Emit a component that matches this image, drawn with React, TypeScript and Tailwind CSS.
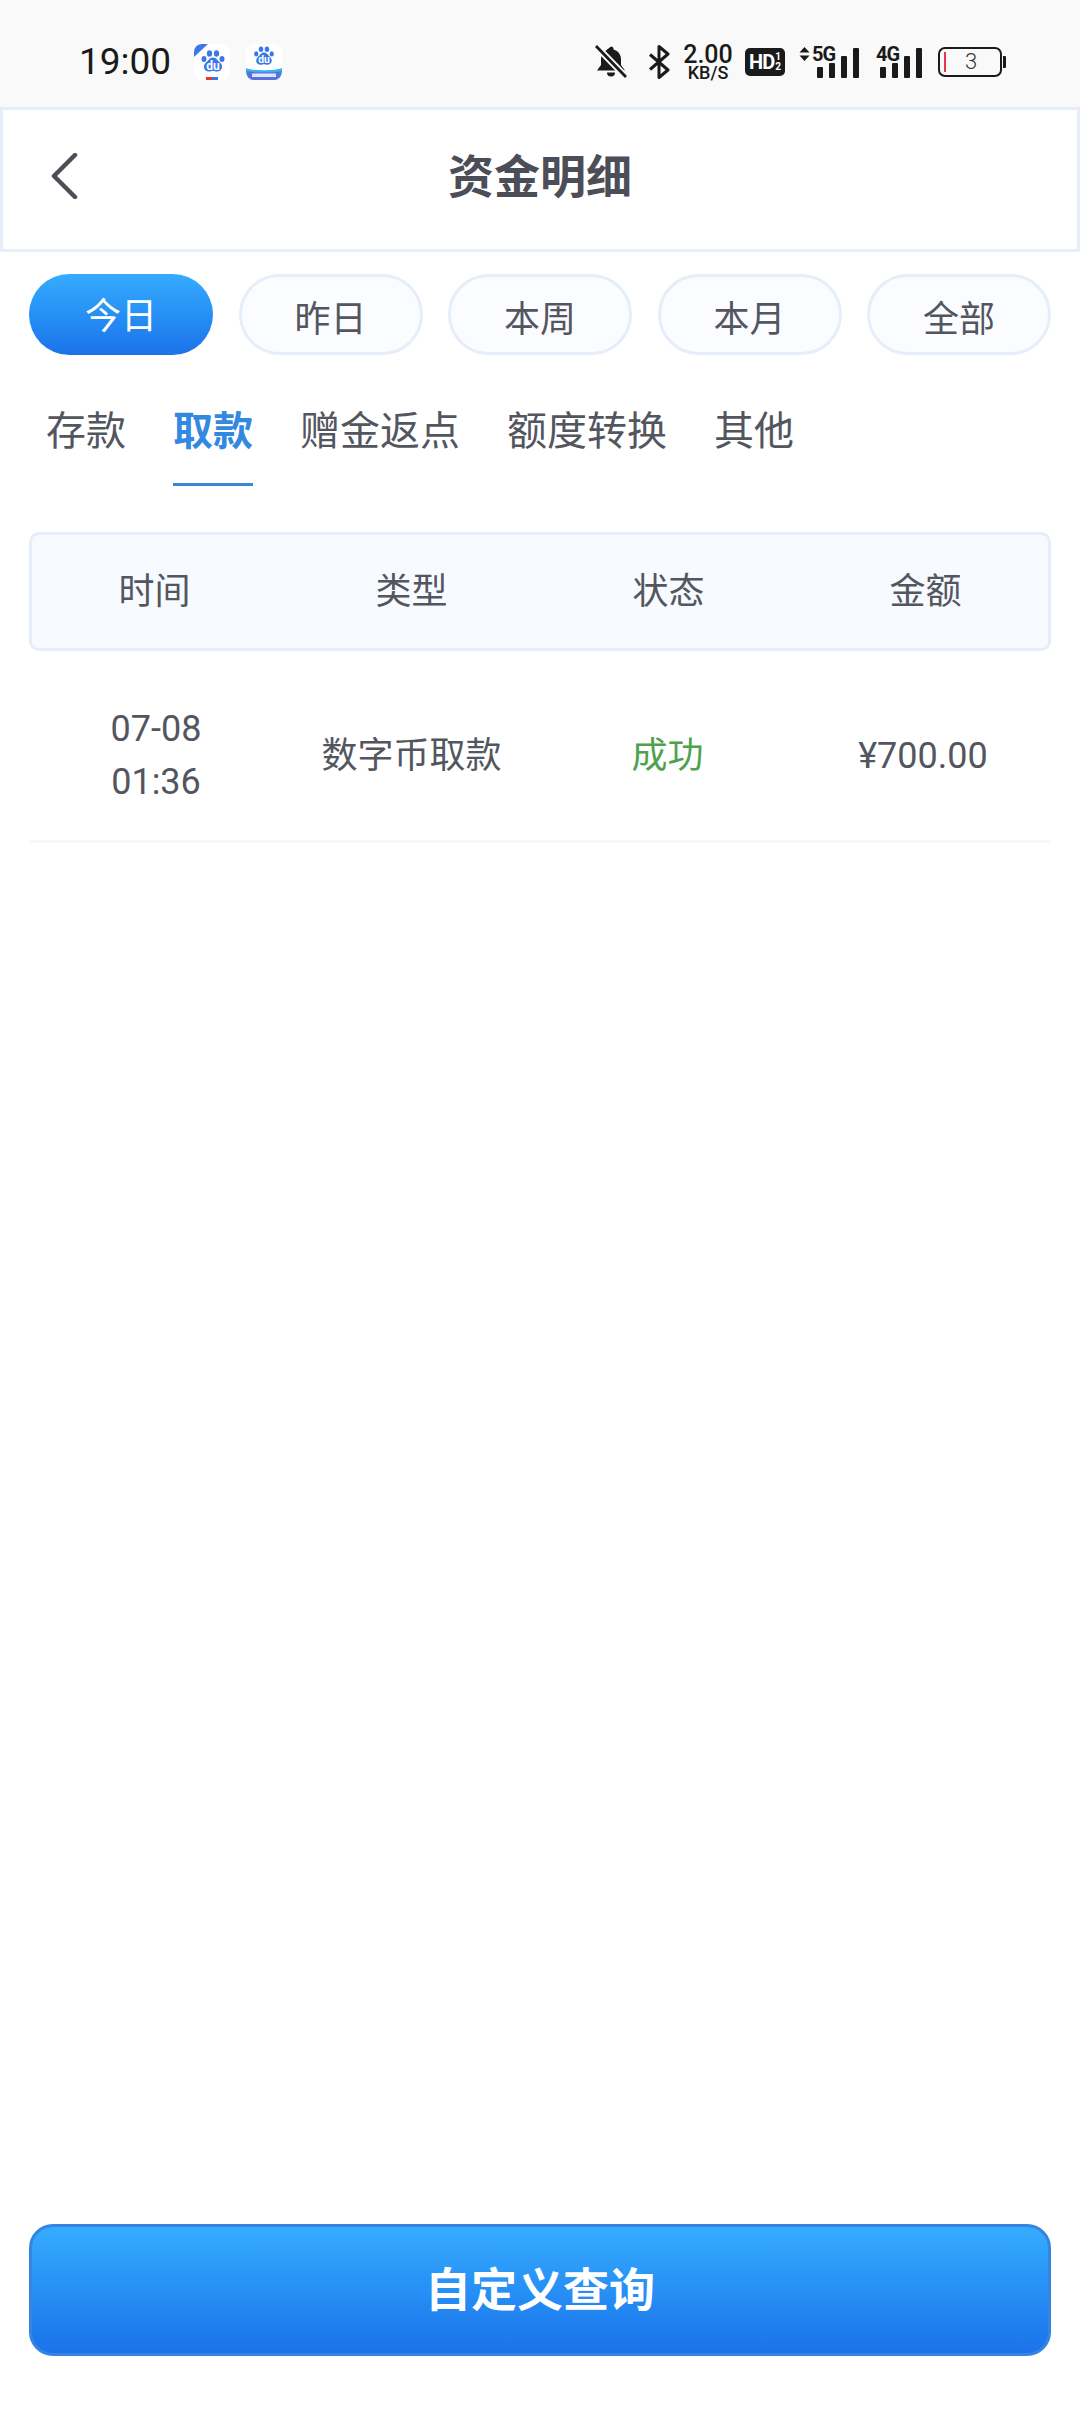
const ranges = ['昨日', '本周', '本月', '全部'];
const tabs = ['存款', '取款', '赠金返点', '额度转换', '其他'];
const columns = ['时间', '类型', '状态', '金额'];

function Paw() {
  return (
    <>
      <ellipse cx="9" cy="15" rx="2.500" ry="3" fill="#3a78e8" />
      <ellipse cx="14.500" cy="9.500" rx="2.600" ry="3.200" fill="#3a78e8" />
      <ellipse cx="21.500" cy="9.500" rx="2.600" ry="3.200" fill="#3a78e8" />
      <ellipse cx="27" cy="15" rx="2.500" ry="3" fill="#3a78e8" />
      <path d="M18 13.500c3.500 0 4.500 3 7 5 3.500 2.800 2.500 9-3 9-1.800 0-2.500-.6-4-.6s-2.200.6-4 .6c-5.500 0-6.500-6.200-3-9 2.500-2 3.500-5 7-5z" fill="#3a78e8" />
      <text x="18" y="25.500" textAnchor="middle" fontSize="12" fontWeight="700" fill="#fff" fontFamily="Roboto, sans-serif">du</text>
    </>
  );
}

function AppIconOne() {
  return (
    <svg width="36" height="36" viewBox="0 0 36 36" className="shrink-0">
      <rect width="36" height="36" rx="8" fill="#fff" />
      <path d="M0 13V8a8 8 0 0 1 8-8h6z" fill="#3a78e8" />
      <g transform="translate(1 0)"><Paw /></g>
      <rect x="12" y="33" width="6" height="3" fill="#e53935" />
      <rect x="18" y="33" width="6" height="3" fill="#3a78e8" />
    </svg>
  );
}

function AppIconTwo() {
  return (
    <svg width="36" height="36" viewBox="0 0 36 36" className="shrink-0">
      <rect width="36" height="36" rx="8" fill="#fff" />
      <g transform="translate(2.500 -3) scale(.86)"><Paw /></g>
      <path d="M0 24c6 3 30 3 36 0v4a8 8 0 0 1-8 8H8a8 8 0 0 1-8-8z" fill="#35b3ea" />
      <path d="M1 27c6 2 28 2 34 0v2a7 7 0 0 1-7 7H8a7 7 0 0 1-7-7z" fill="#5a6fe0" />
      <rect x="6" y="29.500" width="24" height="3.500" fill="#dfe6fb" />
    </svg>
  );
}

function BellOff() {
  return (
    <svg width="32" height="34" viewBox="0 0 32 34" className="shrink-0">
      <path d="M16 1.500a2.500 2.500 0 0 1 2.500 2.500v.6C23.500 6 26 10 26 14.500V20l4 5.500H2L6 20v-5.500c0-2.600.8-5 2.300-7z" fill="#1a1a1a" />
      <path d="M12 27.500h8a4 4 0 0 1-8 0z" fill="#1a1a1a" />
      <path d="M1 1l30 31" stroke="#f9f9f9" strokeWidth="6.500" />
      <path d="M1 1l30 31" stroke="#1a1a1a" strokeWidth="2.800" />
    </svg>
  );
}

function Bluetooth() {
  return (
    <svg width="22" height="34" viewBox="0 0 22 34" className="shrink-0">
      <path d="M2 9.500l18 15.500-9 7.500V1.500l9 7.500L2 24.500" fill="none" stroke="#1a1a1a" strokeWidth="3" strokeLinejoin="round" />
    </svg>
  );
}

function SignalBars() {
  const heights = [11, 15, 22, 30];
  return (
    <div className="flex items-end gap-[6px]">
      {heights.map(h => (
        <div key={h} className="w-[6px] bg-[#1a1a1a] rounded-[1px]" style={{ height: h }} />
      ))}
    </div>
  );
}

function StatusBar() {
  return (
    <div className="h-[107px] bg-[#f9f9f9] flex items-center pl-[79px] pr-[74px] pt-[16px] shrink-0">
      <span className="text-[37px] leading-none text-[#1a1a1a] font-['Roboto'] w-[113px]">19:00</span>
      <div className="ml-[2px] flex items-center gap-[16px]">
        <AppIconOne />
        <AppIconTwo />
      </div>
      <div className="ml-auto flex items-center">
        <BellOff />
        <div className="ml-[21px]"><Bluetooth /></div>
        <div className="ml-[13px] flex flex-col items-center font-['Roboto'] text-[#1a1a1a] leading-none w-[50px]">
          <span className="text-[25px] font-medium leading-[21px]">2.00</span>
          <span className="text-[18px] font-medium leading-[15px]">KB/S</span>
        </div>
        <div className="ml-[12px] w-[40px] h-[28px] rounded-[5px] bg-[#1a1a1a] flex items-center justify-center gap-[1px] text-white font-['Roboto'] font-bold">
          <span className="text-[20px] leading-none tracking-[-1px]">HD</span>
          <span className="flex flex-col text-[10px] leading-[10px]"><span>1</span><span>2</span></span>
        </div>
        <div className="ml-[14px] relative w-[60px] h-[32px] shrink-0">
          <svg width="11" height="14" viewBox="0 0 11 14" className="absolute left-0 top-[1px]">
            <path d="M5.500 0l5 5.500H.5zM5.500 14l5-5.500H.5z" fill="#1a1a1a" />
          </svg>
          <span className="absolute left-[13px] -top-[2px] text-[20px] leading-none font-bold font-['Roboto'] tracking-[-1px] text-[#1a1a1a]">5G</span>
          <div className="absolute right-0 bottom-0"><SignalBars /></div>
        </div>
        <div className="ml-[17px] relative w-[46px] h-[32px] shrink-0">
          <span className="absolute left-0 -top-[2px] text-[20px] leading-none font-bold font-['Roboto'] tracking-[-1px] text-[#1a1a1a]">4G</span>
          <div className="absolute right-0 bottom-0"><SignalBars /></div>
        </div>
        <div className="ml-[16px] flex items-center">
          <div className="w-[64px] h-[30px] border-[2px] border-[#1a1a1a] rounded-[7px] flex items-center pl-[4px]">
            <div className="w-[2px] h-[20px] bg-[#e8344e]" />
            <span className="flex-1 text-center text-[22px] font-light leading-none text-[#333] font-['Roboto'] pr-[4px]">3</span>
          </div>
          <div className="ml-[1px] w-[3px] h-[12px] bg-[#1a1a1a] rounded-r-[1px]" />
        </div>
      </div>
    </div>
  );
}

export default function App() {
  return (
    <div className="w-[1080px] h-[2412px] bg-white flex flex-col overflow-hidden font-['Roboto','Noto_Sans_CJK_SC',sans-serif] text-[#53565f]">
      <StatusBar />

      <div className="h-[145px] shrink-0 border-[3px] border-[#e6eefa] flex items-center pb-[6px] relative">
        <svg width="28" height="46" viewBox="0 0 28 46" className="absolute left-[47px] top-[43px]">
          <path d="M25 2L4 23l21 21" fill="none" stroke="#4b4e57" strokeWidth="4.500" strokeLinecap="round" strokeLinejoin="round" />
        </svg>
        <h1 className="w-full text-center text-[46px] font-bold text-[#4b4e57] leading-none">资金明细</h1>
      </div>

      <div className="flex justify-between px-[29px] mt-[22px]">
        <div className="w-[184px] h-[81px] rounded-full bg-gradient-to-b from-[#36acff] to-[#1c72ea] text-white text-[36px] flex items-center justify-center pt-[5px]">
          今日
        </div>
        {ranges.map(r => (
          <div key={r} className="w-[184px] h-[81px] rounded-full border-[3px] border-[#e6eefa] bg-[#fafcff] text-[36px] flex items-center justify-center pt-[11px]">
            {r}
          </div>
        ))}
      </div>

      <div className="flex px-[46px] gap-[47px] mt-[29px] h-[103px]">
        {tabs.map(t => (
          <div key={t} className="relative pt-[22px]">
            <span className={t === '取款' ? 'text-[40px] leading-[52px] font-bold text-[#3389e0]' : 'text-[40px] leading-[52px]'}>{t}</span>
            {t === '取款' && <div className="absolute left-0 right-0 top-[99px] h-[3px] bg-[#3a86d8]" />}
          </div>
        ))}
      </div>

      <div className="mx-[29px] mt-[45px] h-[119px] grid grid-cols-[repeat(4,257px)] justify-center items-center rounded-[10px] border-[3px] border-[#e6eefa] bg-[#f7faff] text-[36px]">
        {columns.map(c => (
          <div key={c} className="text-center">{c}</div>
        ))}
      </div>

      <div className="mx-[29px] h-[192px] grid grid-cols-[repeat(4,257px)] justify-center items-center border-b-[3px] border-[#f6f8fc] text-[36px] pt-[20px]">
        <div className="text-center leading-[53px] pl-[3px]">
          <div>07-08</div>
          <div>01:36</div>
        </div>
        <div className="text-center">数字币取款</div>
        <div className="text-center text-[#4ea24d] pr-[2px]">成功</div>
        <div className="text-center pr-[5px]">¥700.00</div>
      </div>

      <div className="flex-1" />

      <button className="mx-[29px] mb-[56px] h-[132px] shrink-0 rounded-[24px] border-[3px] border-[#3585e0] bg-gradient-to-b from-[#36acff] to-[#1c72ea] text-white text-[46px] font-bold">
        自定义查询
      </button>
    </div>
  );
}
